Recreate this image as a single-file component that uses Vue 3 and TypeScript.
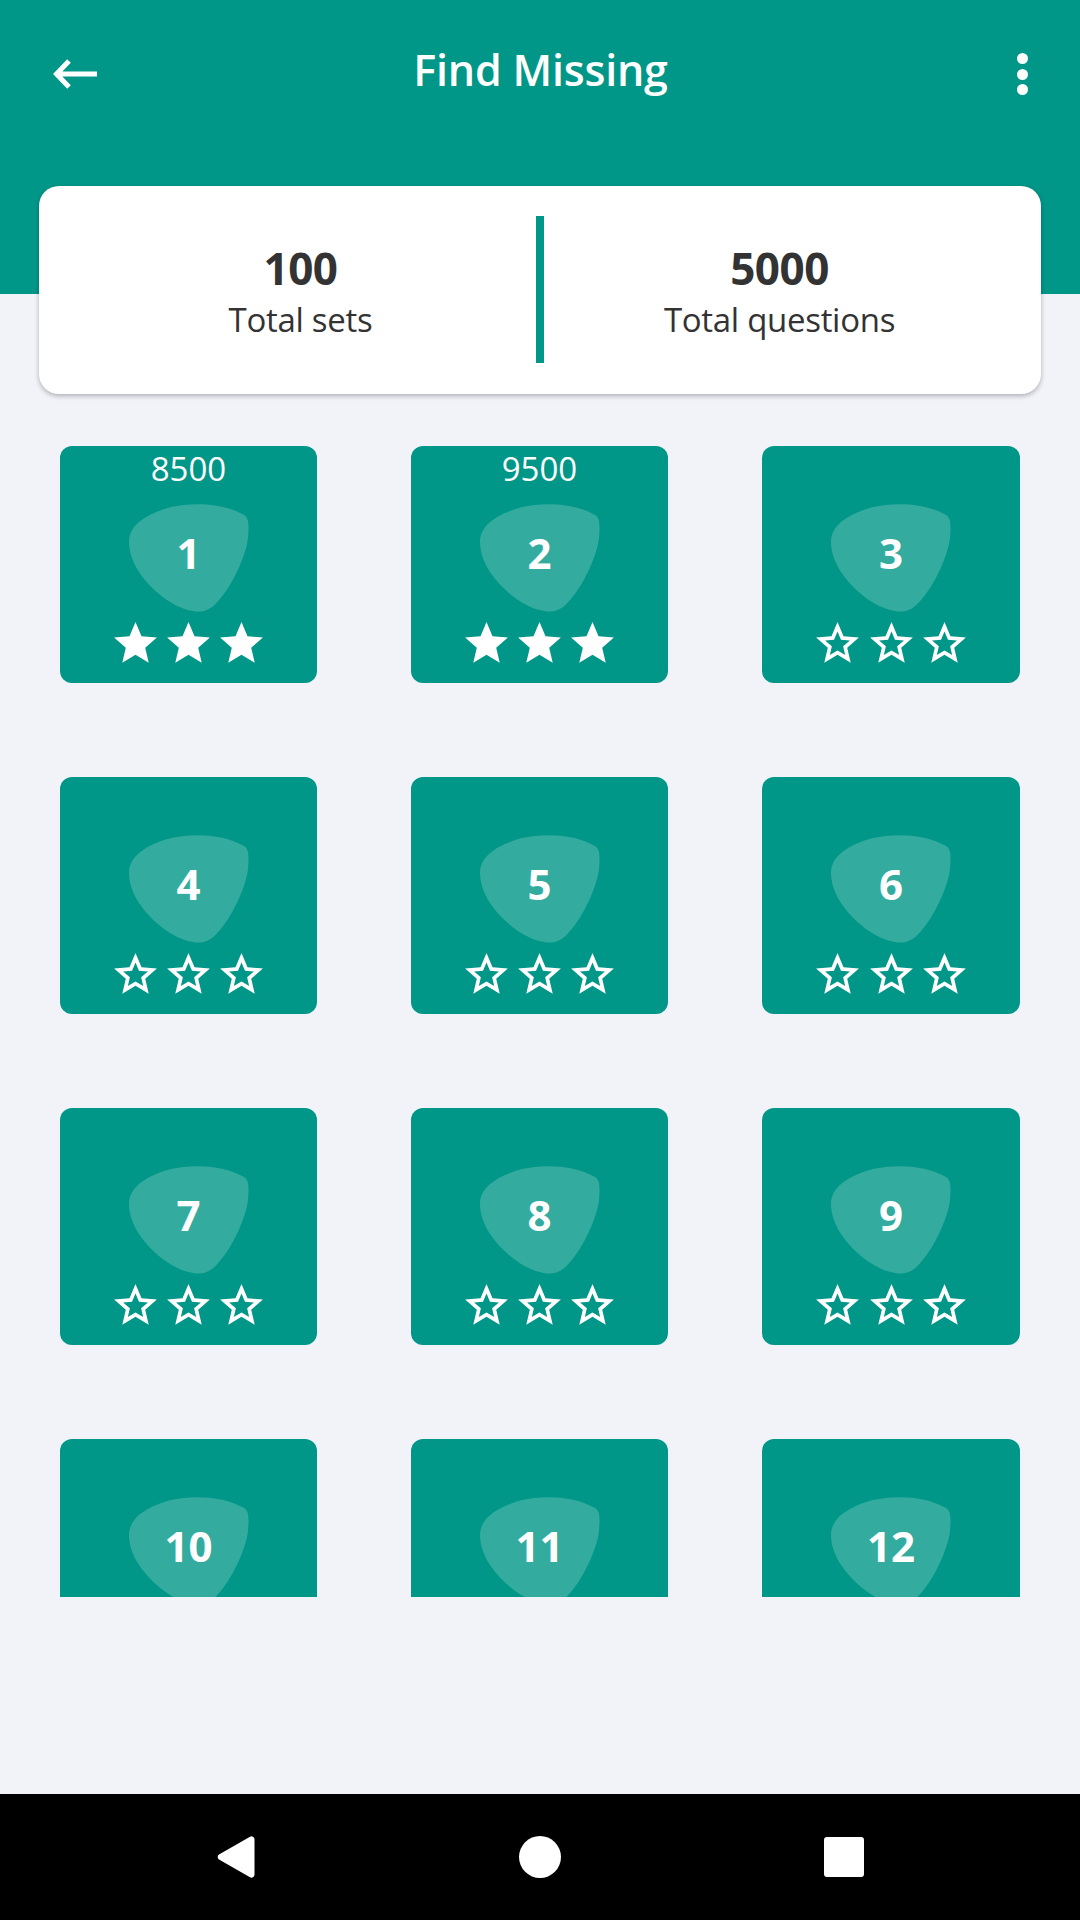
<script setup lang="ts">
interface Level { n: number; score?: number; filled: boolean }
const levels: Level[] = Array.from({ length: 12 }, (_, i) => ({
  n: i + 1,
  score: i === 0 ? 8500 : i === 1 ? 9500 : undefined,
  filled: i < 2,
}))

function starPoints(scale: number): string {
  const cx = 21.5
  const cy = 22.5
  const outer = 22.5 * scale
  const inner = 10.2 * scale
  const pts: string[] = []
  for (let i = 0; i < 10; i++) {
    const r = i % 2 === 0 ? outer : inner
    const a = (Math.PI / 5) * i
    pts.push(`${(cx + r * Math.sin(a)).toFixed(2)} ${(cy - r * Math.cos(a)).toFixed(2)}`)
  }
  return `M${pts.join('L')}Z`
}
const solidStar = starPoints(1)
const hollowStar = `${starPoints(1)}${starPoints(0.58)}`
</script>

<template>
  <div class="screen">
    <header class="header">
      <div class="bar">
        <svg class="back" width="44" height="30" viewBox="0 0 44 30"><path d="M44 15H4M16 2 3.5 15 16 28" fill="none" stroke="#fff" stroke-width="5" /></svg>
        <h1 class="title">Find Missing</h1>
        <div class="dots"><i></i><i></i><i></i></div>
      </div>
    </header>

    <section class="summary">
      <div class="stat"><strong>100</strong><span>Total sets</span></div>
      <div class="divider"></div>
      <div class="stat"><strong>5000</strong><span>Total questions</span></div>
    </section>

    <main class="viewport">
      <div class="grid">
        <article v-for="l in levels" :key="l.n" class="level">
          <div class="score">{{ l.score }}</div>
          <div class="badge">
            <svg class="blob" width="120" height="108" viewBox="0 0 120 108">
              <path d="M0 38C0 18 24 8 42 3 64-2 95-1 115 11c5 3 5 10 4 23-2 18-16 48-29 62-8 10-16 13-26 11C44 104 22 86 10 68 3 57 0 47 0 38Z" fill="#fff" fill-opacity=".2" />
            </svg>
            <span class="num">{{ l.n }}</span>
          </div>
          <div class="stars">
            <svg v-for="s in 3" :key="s" width="43" height="42" viewBox="0 0 43 42">
              <path :d="l.filled ? solidStar : hollowStar" fill="#fff" fill-rule="evenodd" />
            </svg>
          </div>
        </article>
      </div>
    </main>

    <nav class="nav">
      <svg width="38" height="42" viewBox="0 0 38 42"><path d="M33 .8 2 18.5a3 3 0 0 0 0 5L33 41.2a3 3 0 0 0 4.5-2.5V3.3A3 3 0 0 0 33 .8Z" fill="#fff" /></svg>
      <span class="home"></span>
      <span class="recent"></span>
    </nav>
  </div>
</template>

<style>
body { margin: 0; }
</style>

<style scoped>
.screen {
  width: 1080px;
  height: 1920px;
  display: flex;
  flex-direction: column;
  background: #f1f3f9;
  font-family: "Open Sans", "Noto Sans", sans-serif;
  overflow: hidden;
}
.header {
  height: 294px;
  flex: none;
  background: #009788;
  box-sizing: border-box;
  padding: 50px 52px 0 53px;
}
.bar {
  height: 48px;
  display: grid;
  grid-template-columns: 1fr auto 1fr;
  grid-template-rows: 48px;
  align-items: center;
}
.title {
  margin: 0 0 9px;
  color: #fff;
  font-size: 43px;
  font-weight: 600;
  letter-spacing: -0.2px;
  white-space: nowrap;
}
.dots { justify-self: end; display: flex; flex-direction: column; gap: 4.5px; }
.dots i { width: 11px; height: 11px; border-radius: 50%; background: #fff; display: block; }
.summary {
  flex: none;
  margin: -108px 39px 0;
  padding: 0 26px;
  height: 208px;
  position: relative;
  background: #fff;
  border-radius: 20px;
  box-shadow: 0 2px 5px rgba(0, 0, 0, .28);
  display: flex;
  align-items: center;
  color: #333;
}
.stat {
  flex: 1;
  display: flex;
  flex-direction: column;
  align-items: center;
  padding-top: 10px;
}
.stat strong { font-size: 44px; font-weight: 700; line-height: 50px; letter-spacing: -.5px; }
.stat span { font-size: 33px; line-height: 54px; letter-spacing: -.3px; }
.divider { width: 8px; height: 147px; margin-top: -1px; background: #009788; }
.viewport {
  flex: none;
  height: 1151px;
  margin-top: 52px;
  overflow: hidden;
  padding: 0 60px;
  box-sizing: border-box;
}
.grid {
  display: grid;
  grid-template-columns: 257px 257px 258px;
  column-gap: 94px;
  row-gap: 94px;
}
.level {
  height: 237px;
  background: #009788;
  border-radius: 12px;
  color: #fff;
  display: flex;
  flex-direction: column;
  align-items: center;
}
.score { height: 46px; font-size: 33px; line-height: 46px; }
.badge {
  position: relative;
  margin-top: 12px;
  width: 120px;
  height: 108px;
  display: flex;
  align-items: center;
  justify-content: center;
}
.blob { position: absolute; inset: 0; }
.num { position: relative; font-size: 42px; font-weight: 700; line-height: 1; margin-bottom: 10px; }
.stars { margin-top: 10px; display: flex; gap: 10.3px; }
.nav {
  flex: none;
  height: 126px;
  margin-top: auto;
  padding-left: 217px;
  gap: 263.5px;
  background: #000;
  display: flex;
  align-items: center;
}
.home { width: 42px; height: 42px; border-radius: 50%; background: #fff; }
.recent { width: 40px; height: 40px; border-radius: 3px; background: #fff; }
</style>
